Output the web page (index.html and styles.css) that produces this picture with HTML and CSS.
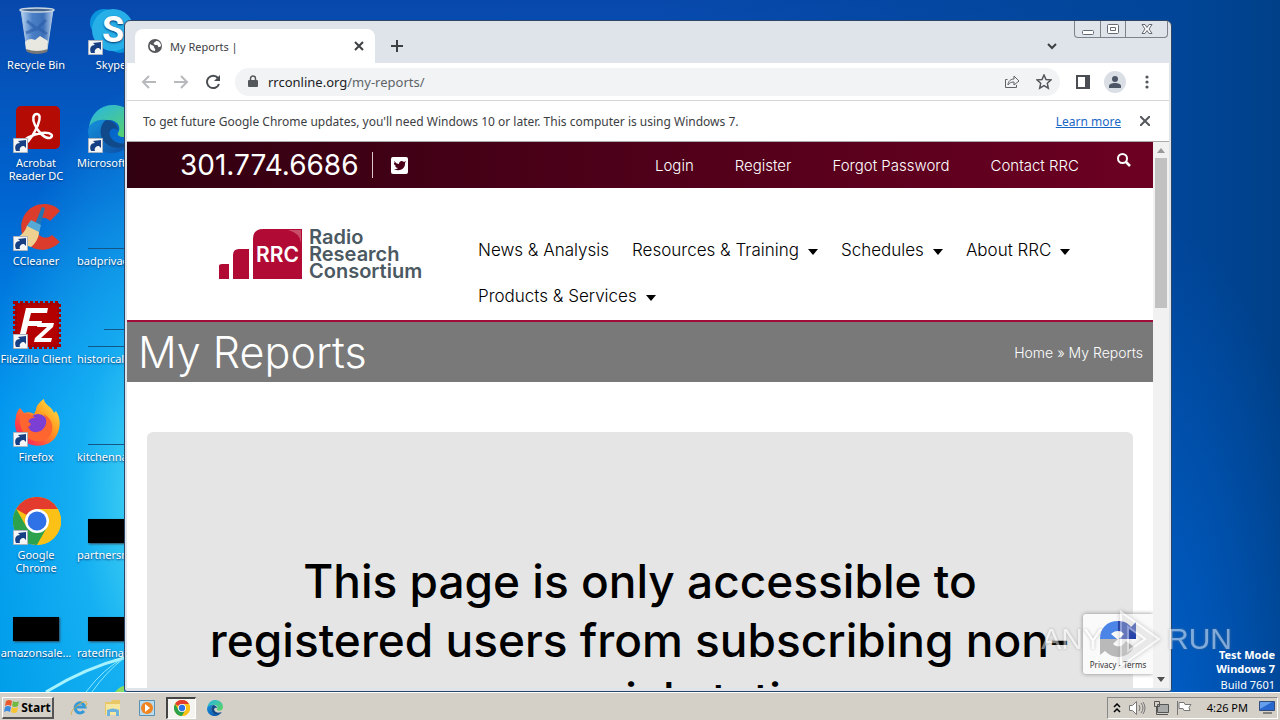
FILE: index.html
```html
<!DOCTYPE html>
<html lang="en">
<head>
  <meta charset="UTF-8">
  <meta name="viewport" content="width=device-width, initial-scale=1.0">
  <title>My Reports |</title>
  <link rel="stylesheet" href="styles.css">
</head>
<body>
  <svg class="defs" aria-hidden="true">
    <defs>
      <linearGradient id="bin" x1="0" x2="1"><stop offset="0" stop-color="#b9d6f2"/><stop offset=".35" stop-color="#4b80c6"/><stop offset=".7" stop-color="#3c70b8"/><stop offset="1" stop-color="#b5cdea"/></linearGradient>
      <linearGradient id="edgeA" x1="0" y1="0" x2="1" y2="1"><stop offset="0" stop-color="#27b5e8"/><stop offset="1" stop-color="#5ed55b"/></linearGradient>
      <linearGradient id="edgeB" x1="0" y1="0" x2="1" y2="1"><stop offset="0" stop-color="#1691dc"/><stop offset="1" stop-color="#0c4aa0"/></linearGradient>
      <linearGradient id="fox" x1="1" y1="0" x2="0" y2="1"><stop offset="0" stop-color="#fff04d"/><stop offset=".4" stop-color="#ff9a1f"/><stop offset=".75" stop-color="#ff3d49"/><stop offset="1" stop-color="#dd167b"/></linearGradient>
      <symbol id="shortcut" viewBox="0 0 15 15">
        <path d="M.5.5h14v14H.5z" fill="#f4f6f8" stroke="#a9b4c0"/>
        <path d="M3 13C1 8 3 5 7 5L5 3l8-1v8l-2-2C8 8 6 10 7 13z" fill="#173f83"/>
      </symbol>
      <symbol id="chrome" viewBox="0 0 48 48">
        <circle cx="24" cy="24" r="24" fill="#fbc116"/>
        <path d="M24 24 3.200 12A24 24 0 0 1 44.800 12H24z" fill="#e33b2e"/>
        <path d="M3.200 12A24 24 0 0 0 24 48L34.400 30 24 24 13.600 30z" fill="#2da24c"/>
        <path d="M24 48A24 24 0 0 0 44.800 12H24l10.400 18z" fill="#fbc116"/>
        <circle cx="24" cy="24" r="12" fill="#fff"/>
        <circle cx="24" cy="24" r="9.500" fill="#2f72e8"/>
      </symbol>
      <symbol id="edge" viewBox="0 0 48 48">
        <path d="M1 22C3 8 13 0 25 0c14 0 23 10 23 20 0 8-5 12-12 12-5 0-7-2-6-4 4-6-1-13-9-13C12 15 4 18 1 22z" fill="url(#edgeA)"/>
        <path d="M0 26c1-8 8-12 18-11-4 3-6 8-5 14 2 10 11 14 20 12 4-1 8-3 11-5-5 8-12 12-20 12C10 48 0 38 0 26z" fill="url(#edgeB)"/>
        <path d="M18 15c5 0 12 4 12 10-5-4-10 0-8 6 3 7 13 10 22 5-8 10-24 8-29-1-4-7-3-15 3-20z" fill="#114a8b"/>
      </symbol>
    </defs>
  </svg>

  <main class="desktop">
    <ul class="icons">
      <li><a href="#"><span class="pic"><svg width="48" height="48" viewBox="0 0 48 48"><path d="M8 3h32l-6 40q-10 5-20 0z" fill="url(#bin)" stroke="#a9c3df"/><path d="M12 35q4-5 10-2l5-4 8 5-1 9q-10 4-21 0z" fill="#e8e7e0"/><path d="m14 14 10 8 9-9M13 26l12-5 9 6" fill="none" stroke="#2a5ca6" stroke-width="3" opacity=".6"/><ellipse cx="24" cy="3" rx="17" ry="2" fill="#46658c" stroke="#c9d6e4" stroke-width="1.500"/><path d="M13 42q11 4 22 0l-1 3q-10 4-20 0z" fill="#777"/></svg></span>Recycle Bin</a></li>
      <li><a href="#"><span class="pic"><svg width="48" height="48" viewBox="0 0 48 48"><rect x="3" y="1" width="44" height="43" rx="5" fill="#b40b05"/><path d="M24 9c5 0 2 10-2 17-4 8-10 15-12 13-2-4 10-10 19-11 10-1 12 3 8 5-5 1-12-6-15-13-3-6-2-11 2-11z" fill="none" stroke="#fff" stroke-width="2.500"/></svg><svg class="mark"><use href="#shortcut"/></svg></span>Acrobat Reader DC</a></li>
      <li><a href="#"><span class="pic"><svg width="48" height="48" viewBox="0 0 48 48"><path d="M47 8 37 18c-7-8-17 0-14 9s12 9 16 5l8 7C35 51 16 49 10 34 4 18 14 1 31 1c7 0 12 2 16 7z" fill="#dc3c2c"/><path d="m29 4 3 1-5 18-5-2z" fill="#2376b2"/><path d="m18 17 10 5-2 8-13-6z" fill="#54a9d6"/><path d="m14 23 12 6c0 6-4 12-8 15C12 42 6 40 1 36c6-2 11-7 13-13z" fill="#eed091"/></svg><svg class="mark"><use href="#shortcut"/></svg></span>CCleaner</a></li>
      <li><a href="#"><span class="pic"><svg width="48" height="48" viewBox="0 0 48 48"><rect x="2" y="2" width="44" height="44" fill="#b40000" stroke="#a00000" stroke-width="4" stroke-dasharray="3 2"/><path d="M13 7h22l-1 5H18l-2 8h13l-1 5H15l-3 12H6z" fill="#fff"/><path d="M25 22h16l-1 4-12 11h11l-1 4H21l1-4 12-11H24z" fill="#fff"/></svg><svg class="mark"><use href="#shortcut"/></svg></span>FileZilla Client</a></li>
      <li><a href="#"><span class="pic"><svg width="48" height="48" viewBox="0 0 48 48"><path d="M3 18c0-4 3-8 4-9l4 5c3-1 7-1 10 1l2-4C23 6 28 2 31 0c0 6 8 7 10 14l2-2c6 9 4 20-1 27-6 8-19 10-28 5C4 39 0 28 3 18z" fill="url(#fox)"/><circle cx="25" cy="25" r="10" fill="#7b3fd4"/><path d="M7 16c7-3 12 0 15 3-5 0-7 2-7 4 5 1 2 5-1 5 2 5 10 7 15 3 6-5 5-12 1-16 12 5 12 20 3 25C22 47 5 38 7 16z" fill="#ff652e"/></svg><svg class="mark"><use href="#shortcut"/></svg></span>Firefox</a></li>
      <li><a href="#"><span class="pic"><svg width="48" height="48"><use href="#chrome"/></svg><svg class="mark"><use href="#shortcut"/></svg></span>Google Chrome</a></li>
      <li><a href="#"><span class="pic thumb"><i></i></span>amazonsale...</a></li>
      <li><a href="#"><span class="pic"><svg width="48" height="48" viewBox="0 0 48 48"><circle cx="16" cy="16" r="14" fill="#0a94dd"/><circle cx="32" cy="31" r="15" fill="#0794d8"/><circle cx="25" cy="23" r="21" fill="#27afe8"/><text x="14" y="35" class="skype-s">S</text></svg><svg class="mark"><use href="#shortcut"/></svg></span>Skype</a></li>
      <li><a class="long" href="#"><span class="pic"><svg width="48" height="48"><use href="#edge"/></svg><svg class="mark"><use href="#shortcut"/></svg></span>Microsoft</a></li>
      <li><a class="long" href="#"><span class="pic line"><i></i></span>badprivac...</a></li>
      <li><a class="long" href="#"><span class="pic line two"><i></i></span>historicalf...</a></li>
      <li><a class="long" href="#"><span class="pic line"><i></i></span>kitchenna...</a></li>
      <li><a class="long" href="#"><span class="pic thumb"><i></i></span>partnersm...</a></li>
      <li><a class="long" href="#"><span class="pic thumb"><i></i></span>ratedfinan...</a></li>
    </ul>
    <svg class="rays" width="124" height="60" viewBox="0 0 124 60" fill="none"><path d="M46 60Q85 36 124 26" stroke="#a6f3ff" stroke-width="3"/><path d="M86 60q18-24 38-34M92 60q14-20 32-34" stroke="#8ae8ff"/><path d="M115 60q5-6 9-6v6z" fill="#88dc63"/></svg>
    <p class="build"><b>Test Mode</b><b>Windows 7</b><span>Build 7601</span></p>

    <section class="window">
      <header class="tabstrip">
        <div class="tab">
          <svg width="14" height="14" viewBox="0 0 14 14"><circle cx="7" cy="7" r="7" fill="#54575b"/><path d="M2 5c2 2 4 1 4 3s2 1 1 4C3 12 1 9 2 5zM8 2c-1 2-3 1-2 3s4 0 4 2 2 1 3 0c0-3-2-5-5-5z" fill="#fff"/></svg>
          <span>My Reports |</span>
          <button aria-label="Close tab"><svg width="10" height="10" viewBox="0 0 10 10"><path d="m1 1 8 8m0-8L1 9" stroke="#3c4043" stroke-width="2"/></svg></button>
        </div>
        <button class="new-tab" aria-label="New tab"><svg width="12" height="12" viewBox="0 0 12 12"><path d="M6 0v12M0 6h12" stroke="#3c4043" stroke-width="2"/></svg></button>
        <button class="tab-search" aria-label="Search tabs"><svg width="10" height="7" viewBox="0 0 10 7"><path d="m1 1 4 4 4-4" fill="none" stroke="#3c4043" stroke-width="2"/></svg></button>
        <div class="controls">
          <button aria-label="Minimize"><svg width="14" height="14" viewBox="0 0 14 14"><rect x="1.500" y="8.500" width="11" height="4" rx="1" fill="#fff" stroke="#656b75"/></svg></button>
          <button aria-label="Maximize"><svg width="14" height="14" viewBox="0 0 14 14"><rect x="1.500" y="2.500" width="11" height="9" rx="1" fill="#fff" stroke="#656b75"/><path d="M4.500 5.500h5v3h-5z" fill="none" stroke="#656b75"/></svg></button>
          <button class="close" aria-label="Close"><svg width="14" height="14" viewBox="0 0 14 14"><path d="M2 2.500h3l2 3 2-3h3L9 7l3 4.500H9l-2-3-2 3H2L5 7z" fill="#fff" stroke="#656b75"/></svg></button>
        </div>
      </header>

      <div class="toolbar">
        <button disabled aria-label="Back"><svg width="16" height="16" viewBox="0 0 16 16"><path d="M15 8H2m6-6L2 8l6 6" fill="none" stroke="#b7b9bc" stroke-width="2"/></svg></button>
        <button disabled aria-label="Forward"><svg width="16" height="16" viewBox="0 0 16 16"><path d="M1 8h13M8 2l6 6-6 6" fill="none" stroke="#b7b9bc" stroke-width="2"/></svg></button>
        <button aria-label="Reload"><svg width="16" height="16" viewBox="0 0 16 16"><path d="M13 4a6.200 6.200 0 1 0 1 6" fill="none" stroke="#4a4d51" stroke-width="2"/><path d="M15 1v6H9z" fill="#4a4d51"/></svg></button>
        <div class="omnibox">
          <svg width="10" height="13" viewBox="0 0 10 13"><path d="M2.500 6V3.500a2.500 2.500 0 0 1 5 0V6" fill="none" stroke="#54575b" stroke-width="1.500"/><rect y="5" width="10" height="7" rx="1" fill="#54575b"/></svg>
          <div class="url">rrconline.org<span>/my-reports/</span></div>
          <button aria-label="Share"><svg width="16" height="16" viewBox="0 0 16 16" fill="none" stroke="#5f6368"><path d="M3.500 5.500h-2v8h11V11M4 11c0-4 3-6 6-6V2l5 5-5 4V8c-3 0-5 1-6 3z"/></svg></button>
          <button aria-label="Bookmark"><svg width="16" height="16" viewBox="0 0 16 16"><path d="m8 1 2 4.500 5 .5-3.700 3.300 1 4.900L8 11.700l-4.300 2.500 1-4.900L1 6l5-.5z" fill="none" stroke="#54575b" stroke-width="1.500"/></svg></button>
        </div>
        <button aria-label="Side panel"><svg width="14" height="14" viewBox="0 0 14 14"><path d="M1 1h12v12H1z" fill="none" stroke="#4a4d51" stroke-width="2"/><path d="M9 1h4v12H9z" fill="#4a4d51"/></svg></button>
        <button class="avatar" aria-label="Profile"><svg width="14" height="14" viewBox="0 0 14 14" fill="#4c5664"><circle cx="7" cy="4" r="3"/><path d="M1 13v-2c0-4 12-4 12 0v2z"/></svg></button>
        <button aria-label="Menu"><svg width="4" height="14" viewBox="0 0 4 14" fill="#54575b"><circle cx="2" cy="2" r="1.600"/><circle cx="2" cy="7" r="1.600"/><circle cx="2" cy="12" r="1.600"/></svg></button>
      </div>

      <div class="infobar">
        <p>To get future Google Chrome updates, you'll need Windows 10 or later. This computer is using Windows 7.</p>
        <a href="#">Learn more</a>
        <button aria-label="Dismiss"><svg width="10" height="10" viewBox="0 0 10 10"><path d="m0 0 10 10m0-10L0 10" stroke="#54575b" stroke-width="2"/></svg></button>
      </div>

      <div class="viewport">
        <div class="page">
          <div class="topbar">
            <a class="phone" href="tel:3017746686">301.774.6686</a>
            <a class="twitter" href="#" aria-label="Twitter"><svg width="17" height="17" viewBox="0 0 17 17"><rect width="17" height="17" rx="2" fill="#fff"/><path d="M3 4c2 2 3 3 5 3 0-3 3-4 5-2l2-1-1 2v1c0 5-6 8-11 5 2 0 3 0 4-1-2 0-2-1-3-2h1C3 8 3 7 3 6h1C3 5 3 5 3 4z" fill="#4a0018"/></svg></a>
            <nav class="account">
              <a href="#">Login</a>
              <a href="#">Register</a>
              <a href="#">Forgot Password</a>
              <a href="#">Contact RRC</a>
            </nav>
            <button class="search" aria-label="Search"><svg width="14" height="14" viewBox="0 0 14 14"><circle cx="5.500" cy="5.500" r="4.500" fill="none" stroke="#fff" stroke-width="2"/><path d="m9 9 4 4" stroke="#fff" stroke-width="2.500"/></svg></button>
          </div>

          <div class="masthead">
            <a class="logo" href="#">
              <svg width="84" height="50" viewBox="0 0 84 50">
                <g fill="#b00a35"><path d="M0 50V37q0-2 3-2h7v15zM14 50V26q0-6 6-6h10v30zM34 50V10Q34 0 44 0h39v50z"/></g>
                <path d="M69 1h13v13q-1-10-13-13z" fill="#c94c69"/>
                <text class="logo-mark" x="37" y="33">RRC</text>
              </svg>
              <span>Radio<br>Research<br>Consortium</span>
            </a>
            <nav class="menu">
              <a href="#">News &amp; Analysis</a>
              <a class="drop" href="#">Resources &amp; Training</a>
              <a class="drop" href="#">Schedules</a>
              <a class="drop" href="#">About RRC</a>
              <a class="drop" href="#">Products &amp; Services</a>
            </nav>
          </div>

          <div class="titlebar">
            <h1>My Reports</h1>
            <p><a href="#">Home</a> » My Reports</p>
          </div>

          <div class="notice">
            <h2>This page is only accessible to registered users from subscribing non-commercial stations</h2>
          </div>
        </div>
        <div class="scrollbar"><i class="up"></i><i class="grip"></i><i class="down"></i></div>
        <div class="recaptcha">
          <svg width="38" height="40" viewBox="0 0 38 40"><path d="M1 20C1 9 8 2 19 2v10c-3 0-5 1-7 3l6 5z" fill="#4c85e8"/><path d="M19 2c6 0 10 2 13 6l5-5v17H20l5-5c-2-2-3-3-6-3z" fill="#213faf"/><path d="M1 20v16l5-4c8 9 23 8 29-4l-8-6c-3 6-9 7-13 3l5-5z" fill="#b9b9b9"/></svg>
          <p><a href="#">Privacy</a> - <a href="#">Terms</a></p>
        </div>
      </div>
    </section>

    <div class="watermark"><span>ANY</span><svg width="56" height="58" viewBox="0 0 56 58"><path d="M14 2v54l38-27zM21 17v24l17-12z" fill="#fff" fill-opacity=".5" fill-rule="evenodd" stroke="#fff" stroke-width="2"/></svg><span>RUN</span></div>
  </main>

  <footer class="taskbar">
    <button class="start"><svg width="16" height="16" viewBox="0 0 16 16"><path d="M2 2q3-2 6 0L7 7Q4 5 1 7z" fill="#e9582b"/><path d="M9 2q3 2 6 0l-1 5q-3 2-6 0z" fill="#72b844"/><path d="M1 8q3-2 6 0l-1 5q-3-2-6 0z" fill="#3e8cdf"/><path d="M8 8q3 2 6 0l-1 5q-3 2-6 0z" fill="#f8c431"/></svg>Start</button>
    <button class="app" aria-label="Internet Explorer"><svg width="18" height="18" viewBox="0 0 18 18" fill="none"><path d="M14 12a5 5 0 1 1 1-4H5" stroke="#3499d8" stroke-width="3"/><path d="M2 16C-2 13 12 1 16 3c2 1 0 4-1 5" stroke="#d9ae3b"/></svg></button>
    <button class="app" aria-label="Explorer"><svg width="18" height="18" viewBox="0 0 18 18"><path d="M1 3h6l1-2h8v15H1z" fill="#e8c767"/><path d="M2 5h14v11H2z" fill="#f7e6a0"/><path d="M3 17v-6q6-3 12 0v6h-3v-4H6v4z" fill="#6db3db"/></svg></button>
    <button class="app" aria-label="Media Player"><svg width="18" height="18" viewBox="0 0 18 18"><path d="M1.500 1.500h15v15h-15z" fill="#b9dbed" stroke="#5b91b2"/><circle cx="9" cy="9" r="6" fill="#f08420"/><path d="m7 5 5 4-5 4z" fill="#fff"/></svg></button>
    <button class="app active" aria-label="Chrome"><svg width="16" height="16"><use href="#chrome"/></svg></button>
    <button class="app" aria-label="Edge"><svg width="16" height="16"><use href="#edge"/></svg></button>
    <div class="tray">
      <svg width="8" height="10" viewBox="0 0 8 10"><path d="m1 4 3-3 3 3M1 9l3-3 3 3" fill="none" stroke="#000" stroke-width="1.500"/></svg>
      <svg width="18" height="16" viewBox="0 0 18 16" fill="none" stroke="#777"><path d="M1.500 5.500h3l4-4v13l-4-4h-3z" fill="#fff"/><path d="M11 5q2 3 0 6m2-8q4 5 0 10m2-11q4 6 0 12"/></svg>
      <svg width="16" height="16" viewBox="0 0 16 16"><path d="M4.500 4.500h11v8h-11z" fill="#a7aaa9" stroke="#555"/><path d="M7 14.500h8M1.500 1.500h5v5h-5zM3.500 7v7.500h5" fill="none" stroke="#555"/></svg>
      <svg width="16" height="16" viewBox="0 0 16 16"><path d="M1.500 1v14M3 2.500h5l1 2h6l-2 3 1 3H8l-1-2H3z" fill="#fff" stroke="#777"/></svg>
      <time>4:26 PM</time>
      <svg width="16" height="13" viewBox="0 0 16 13"><path d="M.5.5h15v9H.5z" fill="#2767ce" stroke="#334c7b"/><path d="M1 1h12L1 8z" fill="#65a0ec"/><path d="M4 12h9" stroke="#333"/></svg>
    </div>
  </footer>
</body>
</html>
```
FILE: styles.css
```css
* {
  box-sizing: border-box;
}
body {
  display: flex;
  flex-direction: column;
  height: 100vh;
  margin: 0;
  overflow: hidden;
  font-family: "Noto Sans", sans-serif;
  font-size: 11px;
}
button {
  display: flex;
  align-items: center;
  justify-content: center;
  padding: 0;
  border: 0;
  background: none;
  font: inherit;
}
a {
  color: inherit;
  text-decoration: none;
}
p, h1, h2 {
  margin: 0;
}
svg {
  flex: none;
}
.defs {
  position: absolute;
  width: 0;
  height: 0;
}

/* desktop */
.desktop {
  position: relative;
  flex: 1;
  min-height: 0;
  background:
    radial-gradient(ellipse 180px 420px at 160px 500px, #4fdcf4 0%, rgba(30, 185, 245, 0.7) 45%, rgba(0, 160, 240, 0) 100%),
    radial-gradient(ellipse 180px 500px at 1150px 720px, #005fc8 0%, rgba(0, 95, 200, 0) 100%),
    linear-gradient(90deg, rgba(0, 70, 150, 0) 0%, rgba(0, 70, 150, 0) 50%, #004598 92%, #004088 100%),
    linear-gradient(180deg, #0848ac 0%, #0064d0 28%, #0094ef 60%, #009eea 100%);
}
.icons {
  display: grid;
  grid-template-rows: repeat(7, 98px);
  grid-auto-columns: 72px;
  grid-auto-flow: column;
  column-gap: 3px;
  width: 147px;
  height: 100%;
  margin: 0;
  padding: 7px 0 0;
  overflow: hidden;
  list-style: none;
}
.icons a {
  display: flex;
  flex-direction: column;
  align-items: center;
  color: #fff;
  line-height: 13px;
  text-align: center;
  text-shadow: 0 1px 2px #00356d;
}
.icons .long {
  align-items: flex-start;
  padding-left: 2px;
  white-space: nowrap;
}
.pic {
  display: block;
  position: relative;
  width: 48px;
  height: 48px;
  margin: 0 0 3px 2px;
}
.long .pic {
  margin-left: 11px;
}
.mark {
  position: absolute;
  left: 0;
  bottom: 0;
  width: 15px;
  height: 15px;
}
.thumb i {
  display: block;
  width: 46px;
  height: 24px;
  margin-top: 22px;
  background: #000;
  box-shadow: 1px 1px 2px #345;
}
.line i {
  display: block;
  height: 46px;
  border-bottom: 1px solid #135789;
}
.line.two {
  background: linear-gradient(#135789, #135789) 16px 28px / 32px 1px no-repeat;
}
.skype-s {
  fill: #fff;
  font: bold 36px Roboto, sans-serif;
}
.rays {
  position: absolute;
  left: 0;
  bottom: 0;
}
.build {
  position: absolute;
  right: 5px;
  bottom: 0;
  color: #fff;
  line-height: 14px;
  text-align: right;
}
.build b, .build span {
  display: block;
}
.build span {
  padding-top: 2px;
}

/* browser window */
.window {
  display: flex;
  flex-direction: column;
  position: absolute;
  inset: 20px 108px 0 124px;
  border: 1px solid #2b4666;
  border-radius: 6px 6px 3px 3px;
  padding: 0 2px 3px;
  background: #dfe3ea;
  overflow: hidden;
}
.tabstrip {
  display: flex;
  align-items: center;
  height: 42px;
  padding: 0 1px 0 8px;
}
.tab {
  display: flex;
  align-items: center;
  align-self: flex-end;
  gap: 8px;
  width: 240px;
  height: 34px;
  padding: 0 11px 0 13px;
  border-radius: 8px 8px 0 0;
  background: #fff;
  color: #3c4043;
}
.tab button {
  margin-left: auto;
}
.new-tab {
  width: 44px;
  height: 34px;
  align-self: flex-end;
}
.tab-search {
  align-self: flex-end;
  width: 20px;
  height: 34px;
  margin-left: auto;
  margin-right: 12px;
}
.controls {
  display: flex;
  align-self: flex-start;
  border: 1px solid #7b828c;
  border-top: 0;
  border-radius: 0 0 4px 4px;
}
.controls button {
  width: 25px;
  height: 16px;
}
.controls button + button {
  border-left: 1px solid #7b828c;
}
.controls .close {
  width: 42px;
}
.toolbar {
  display: flex;
  align-items: center;
  height: 38px;
  padding: 0 6px;
  border-bottom: 1px solid #d5d7d9;
  background: #fff;
}
.toolbar button {
  width: 32px;
  height: 28px;
}
.omnibox {
  display: flex;
  align-items: center;
  flex: 1;
  height: 28px;
  margin: 0 7px 0 6px;
  padding-left: 13px;
  border-radius: 14px;
  background: #f1f3f4;
}
.url {
  flex: 1;
  padding-left: 10px;
  color: #202124;
  font-size: 13px;
}
.url span {
  color: #606468;
}
.toolbar .avatar {
  width: 22px;
  height: 22px;
  margin: 0 5px;
  border-radius: 50%;
  background: #dadfe5;
}
.infobar {
  display: flex;
  align-items: center;
  height: 41px;
  padding: 0 19px 0 16px;
  border-bottom: 1px solid #aaa;
  background: #fff;
  color: #3c4043;
  font-size: 12px;
}
.infobar a {
  margin-left: auto;
  color: #1967c5;
  text-decoration: underline;
}
.infobar button {
  margin-left: 19px;
}

/* web page */
.viewport {
  display: flex;
  position: relative;
  flex: 1;
  min-height: 0;
  background: #fff;
}
.page {
  flex: 1;
  overflow: hidden;
  font-family: Inter, sans-serif;
}
.topbar {
  display: flex;
  align-items: center;
  height: 46px;
  padding: 0 22px 0 53px;
  background: linear-gradient(90deg, #310010, #6c0023);
  color: #fff;
}
.phone {
  padding-right: 13px;
  border-right: 1px solid #d9c5cb;
  font-size: 28px;
  line-height: 26px;
}
.twitter {
  display: flex;
  margin-left: 18px;
}
.account {
  display: flex;
  gap: 41px;
  margin-left: auto;
  font-size: 15px;
  font-weight: 300;
}
.search {
  align-self: flex-start;
  margin: 11px 0 0 38px;
}
.masthead {
  display: flex;
  align-items: flex-start;
  height: 134px;
  padding: 39px 60px 0 92px;
  border-bottom: 2px solid #a00c39;
}
.logo {
  display: flex;
  gap: 6px;
  width: 259px;
  padding-top: 2px;
  color: #4b5962;
  font-size: 20px;
  font-weight: 600;
  line-height: 17px;
}
.logo-mark {
  fill: #fff;
  font: 600 21px Inter, sans-serif;
}
.menu {
  display: flex;
  flex: 1;
  flex-wrap: wrap;
  column-gap: 23px;
  font-size: 17px;
  font-weight: 300;
  line-height: 46px;
  color: #000;
}
.drop::after {
  content: "";
  display: inline-block;
  margin-left: 9px;
  border: 5px solid transparent;
  border-top: 6px solid #000;
  border-bottom: 0;
  vertical-align: 1px;
}
.titlebar {
  display: flex;
  align-items: center;
  justify-content: space-between;
  height: 60px;
  padding: 0 10px 0 11px;
  background: #797979;
  color: #fff;
}
.titlebar h1 {
  font-size: 43px;
  font-weight: 300;
}
.titlebar p {
  font-size: 14px;
  font-weight: 300;
}
.notice {
  height: 400px;
  margin: 50px 20px;
  padding: 120px 50px 0;
  border-radius: 6px;
  background: #e5e5e5;
  color: #000;
}
.notice h2 {
  font-size: 46px;
  font-weight: 500;
  line-height: 59px;
  text-align: center;
}
.scrollbar {
  display: flex;
  flex-direction: column;
  align-items: center;
  width: 16px;
  padding: 6px 0;
  background: #f1f1f1;
}
.scrollbar .up, .scrollbar .down {
  border: 4px solid transparent;
}
.scrollbar .up {
  border-bottom: 5px solid #999;
  border-top: 0;
}
.scrollbar .down {
  margin-top: auto;
  border-top: 5px solid #505050;
  border-bottom: 0;
}
.grip {
  width: 12px;
  height: 28%;
  margin-top: 5px;
  background: #c1c1c1;
}
.recaptcha {
  display: flex;
  flex-direction: column;
  align-items: center;
  position: absolute;
  right: 16px;
  bottom: 14px;
  width: 70px;
  height: 60px;
  padding-top: 5px;
  border-radius: 3px 0 0 3px;
  background: #fafafa;
  box-shadow: 0 0 4px #888;
  clip-path: inset(-5px 0 -5px -5px);
  color: #333;
  font-size: 8px;
  white-space: nowrap;
}
.watermark {
  display: flex;
  align-items: center;
  gap: 4px;
  position: absolute;
  right: 48px;
  bottom: 24px;
  color: #fff;
  font: 30px "Liberation Sans Narrow", "Liberation Sans", sans-serif;
  opacity: 0.5;
  text-shadow: 0 0 3px #777;
  pointer-events: none;
}
.watermark svg {
  filter: drop-shadow(0 0 2px #777);
}

/* taskbar */
.taskbar {
  display: flex;
  align-items: center;
  height: 28px;
  padding: 2px 2px 0;
  border-top: 1px solid #fff;
  background: #d4d0c8;
}
.start {
  gap: 1px;
  width: 52px;
  height: 22px;
  margin-right: 10px;
  border: 1px solid #fff;
  border-right: 2px solid #555;
  border-bottom: 2px solid #555;
  font-weight: bold;
  font-size: 12px;
}
.app {
  width: 30px;
  height: 22px;
  margin-right: 4px;
}
.active {
  border: 1px solid #fff;
  border-top: 2px solid #444;
  border-left: 2px solid #444;
  background: #f5f4f1;
}
.tray {
  display: flex;
  align-items: center;
  gap: 7px;
  height: 22px;
  margin-left: auto;
  padding: 0 2px 0 5px;
  border: 1px solid #fff;
  border-top-color: #888;
  border-left-color: #888;
}
.tray time {
  margin: 0 4px 0 8px;
}
```
